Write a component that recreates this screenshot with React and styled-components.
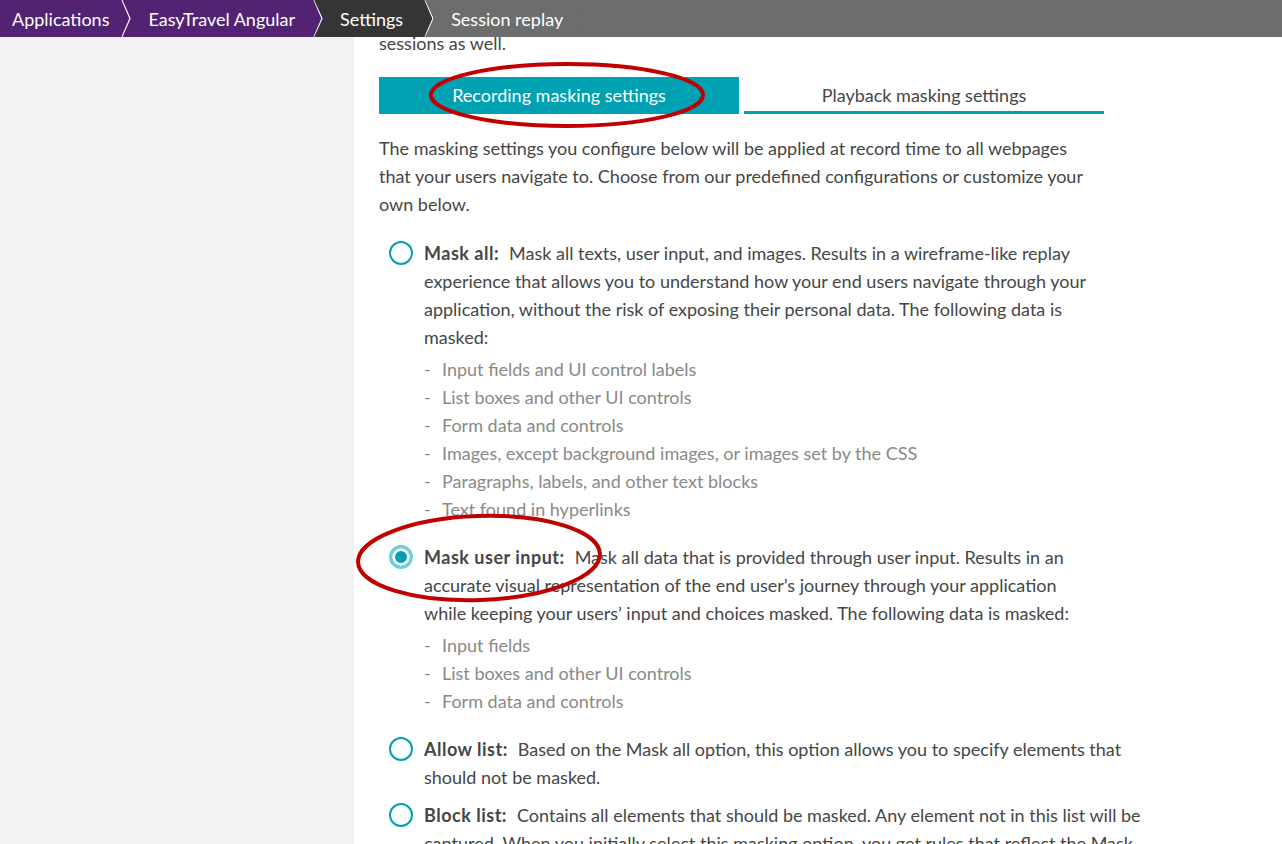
import styled, { createGlobalStyle } from 'styled-components'

const Global = createGlobalStyle`
  html, body { margin: 0; padding: 0; height: 100%; overflow: hidden; }
  body { font-family: Lato, "Open Sans", sans-serif; color: #454646; background: #fff; }
`

const Page = styled.div`
  display: grid;
  grid-template-rows: 37px 1fr;
  height: 844px;
  width: 1282px;
`

const Crumbs = styled.nav`
  display: flex;
  background: #6d6d6d;
  height: 37px;
  overflow: hidden;
  position: relative;
  z-index: 2;
`

const Crumb = styled.div`
  position: relative;
  display: flex;
  align-items: center;
  height: 100%;
  padding: 0 ${p => p.$pr || 20}px 0 ${p => (p.$first ? 12 : 25)}px;
  margin-right: -8px;
  font-size: 18px;
  color: #fff;
  background: ${p => p.$bg};
  z-index: ${p => p.$z};
  clip-path: polygon(0 0, calc(100% - 9px) 0, 100% 50%, calc(100% - 9px) 100%, 0 100%);
  white-space: nowrap;
  svg {
    position: absolute;
    right: 0;
    top: 0;
  }
`

const Body = styled.div`
  display: grid;
  grid-template-columns: 354px 1fr;
  overflow: hidden;
`

const Sidebar = styled.aside`
  background: #f2f2f2;
`

const Main = styled.main`
  position: relative;
  padding: 0 0 0 25px;
  overflow: hidden;
`

const Text = styled.p`
  margin: 0;
  font-size: 18px;
  line-height: 28px;
  width: ${p => p.$w || 720}px;
`

const Lead = styled(Text)`
  margin-top: -8px;
`

const Tabs = styled.div`
  display: grid;
  grid-template-columns: 360px 360px;
  gap: 5px;
  margin: 20px 0 20px;
`

const Tab = styled.div`
  height: 37px;
  display: flex;
  align-items: center;
  justify-content: center;
  font-size: 18px;
  box-sizing: border-box;
  background: ${p => (p.$active ? '#00a1b2' : 'transparent')};
  color: ${p => (p.$active ? '#fff' : '#454646')};
  border-bottom: 3px solid #00a1b2;
  padding-top: 2px;
`

const Options = styled.div`
  display: grid;
  gap: 10px;
  margin-top: 21px;
  padding-left: 10px;
`

const Option = styled.div`
  display: grid;
  grid-template-columns: 24px 1fr;
  column-gap: 11px;
  align-items: start;
`

const Radio = styled.span`
  width: 24px;
  height: 24px;
  margin-top: 2px;
  box-sizing: border-box;
  border-radius: 50%;
  border: 2px solid #00a1b2;
  ${p =>
    p.$checked &&
    `
    border: 3px solid #6dd0da;
    box-shadow: inset 0 0 0 3px #fff, inset 0 0 0 4px #00a1b2;
    background: #00a1b2;
  `}
`

const Label = styled.b`
  font-weight: 700;
  letter-spacing: 0.5px;
  margin-right: 10px;
`

const Bullets = styled.ul`
  list-style: none;
  margin: 4px 0 10px;
  padding: 0;
  color: #898989;
  font-size: 18px;
  line-height: 28px;
  li {
    display: grid;
    grid-template-columns: 18px 1fr;
  }
`

const Marks = styled.svg`
  position: absolute;
  left: 0;
  top: 0;
  pointer-events: none;
`

const Chevron = () => (
  <svg width="10" height="37" viewBox="0 0 10 37">
    <polyline points="1,0 9,18.5 1,37" fill="none" stroke="#fff" strokeWidth="1.2" />
  </svg>
)

const crumbs = [
  { t: 'Applications', bg: '#522273', pr: 22 },
  { t: 'EasyTravel Angular', bg: '#522273', pr: 28 },
  { t: 'Settings', bg: '#353535', pr: 31 },
]

const options = [
  {
    label: 'Mask all:',
    lines: [
      'Mask all texts, user input, and images. Results in a wireframe-like replay',
      'experience that allows you to understand how your end users navigate through your',
      'application, without the risk of exposing their personal data. The following data is',
      'masked:',
    ],
    items: [
      'Input fields and UI control labels',
      'List boxes and other UI controls',
      'Form data and controls',
      'Images, except background images, or images set by the CSS',
      'Paragraphs, labels, and other text blocks',
      'Text found in hyperlinks',
    ],
  },
  {
    label: 'Mask user input:',
    checked: true,
    lines: [
      'Mask all data that is provided through user input. Results in an',
      'accurate visual representation of the end user’s journey through your application',
      'while keeping your users’ input and choices masked. The following data is masked:',
    ],
    items: ['Input fields', 'List boxes and other UI controls', 'Form data and controls'],
  },
  {
    label: 'Allow list:',
    lines: [
      'Based on the Mask all option, this option allows you to specify elements that',
      'should not be masked.',
    ],
  },
  {
    label: 'Block list:',
    lines: [
      'Contains all elements that should be masked. Any element not in this list will be',
      'captured. When you initially select this masking option, you get rules that reflect the Mask',
      'user input option.',
    ],
  },
]

export default function App() {
  return (
    <>
      <Global />
      <Page>
        <Crumbs>
          {crumbs.map((c, i) => (
            <Crumb key={c.t} $bg={c.bg} $pr={c.pr} $z={10 - i} $first={i === 0}>
              {c.t}
              <Chevron />
            </Crumb>
          ))}
          <Crumb $bg="#6d6d6d" $z={1}>Session replay</Crumb>
        </Crumbs>
        <Body>
          <Sidebar />
          <Main>
            <Lead>sessions as well.</Lead>
            <Tabs>
              <Tab $active>Recording masking settings</Tab>
              <Tab>Playback masking settings</Tab>
            </Tabs>
            <Text>
              The masking settings you configure below will be applied at record time to all webpages
              that your users navigate to. Choose from our predefined configurations or customize your
              own below.
            </Text>
            <Options>
              {options.map(o => (
                <Option key={o.label}>
                  <Radio $checked={o.checked} />
                  <div>
                    <Text as="div" $w={780}>
                      <Label>{o.label}</Label>
                      {o.lines.map((l, i) => (
                        <span key={i}>
                          {i > 0 && <br />}
                          {l}
                        </span>
                      ))}
                    </Text>
                    {o.items && (
                      <Bullets>
                        {o.items.map(it => (
                          <li key={it}>
                            <span>-</span>
                            <span>{it}</span>
                          </li>
                        ))}
                      </Bullets>
                    )}
                  </div>
                </Option>
              ))}
            </Options>
            <Marks width="928" height="807">
              <ellipse cx="213" cy="58" rx="136" ry="31" fill="none" stroke="#c00000" strokeWidth="4" />
              <ellipse
                cx="125"
                cy="521"
                rx="121"
                ry="42"
                fill="none"
                stroke="#c00000"
                strokeWidth="4"
                transform="rotate(-2 125 521)"
              />
            </Marks>
          </Main>
        </Body>
      </Page>
    </>
  )
}
